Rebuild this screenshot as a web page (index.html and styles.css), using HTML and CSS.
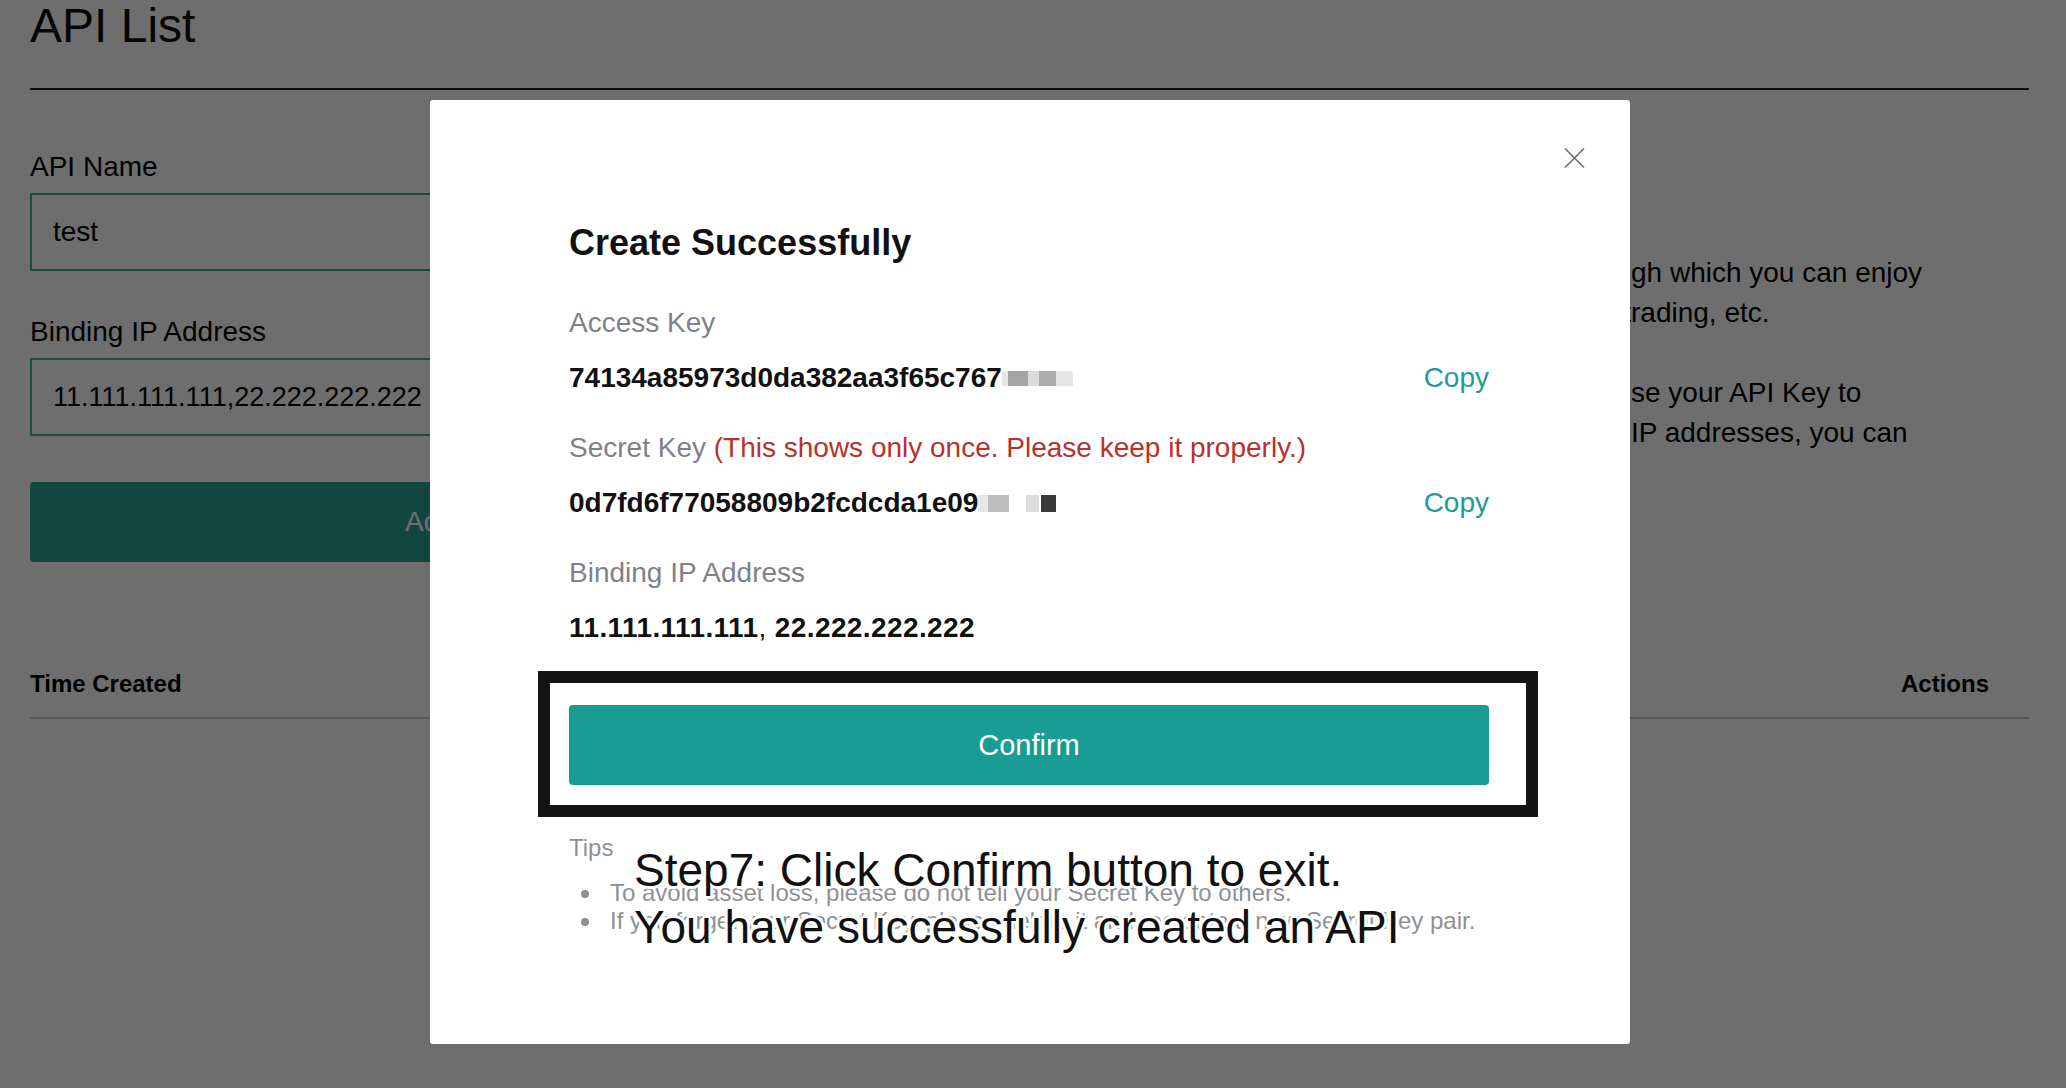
FILE: index.html
```html
<!DOCTYPE html>
<html lang="en">
<head>
<meta charset="utf-8">
<title>API List</title>
<link rel="stylesheet" href="styles.css">
</head>
<body>
<div class="page">
  <h1 class="page-title">API List</h1>
  <div class="main">
    <form class="form-col">
      <label class="f-label">API Name</label>
      <div class="f-input">test</div>
      <label class="f-label f-gap">Binding IP Address</label>
      <div class="f-input f-ip">11.111.111.111,22.222.222.222</div>
      <button type="button" class="add-btn">Add</button>
    </form>
    <div class="info-col">
      <p class="info-p">
        <span class="ln"><span class="hid">API is a powerful tool, throu</span><span>gh which you can enjoy</span></span>
        <span class="ln"><span class="hid">services such as automatic t</span><span>rading, etc.</span></span>
      </p>
      <p class="info-p">
        <span class="ln"><span class="hid">We recommend that you u</span><span>se your API Key to</span></span>
        <span class="ln"><span class="hid">bind IP addresses. If you bind </span><span>IP addresses, you can</span></span>
      </p>
    </div>
  </div>
  <div class="table-head">
    <span>Time Created</span>
    <span>Actions</span>
  </div>
</div>

<div class="mask"></div>

<div class="modal">
  <svg class="m-close" viewBox="0 0 21 20" width="21" height="20" aria-hidden="true">
    <path d="M1 0.5 L20 19.5 M20 0.5 L1 19.5" stroke="#6f6f6f" stroke-width="1.6" fill="none"/>
  </svg>
  <h2 class="m-title">Create Successfully</h2>

  <div class="m-field">
    <div class="m-label">Access Key</div>
    <div class="m-row">
      <span class="m-value">74134a85973d0da382aa3f65c767<span class="blur b1"><i class="w6 c-l"></i><i class="w20 c-m"></i><i class="w11 c-l2"></i><i class="w17 c-m2"></i><i class="w17 c-l"></i></span></span>
      <span class="m-copy">Copy</span>
    </div>
  </div>

  <div class="m-field">
    <div class="m-label">Secret Key <span class="m-warn">(This shows only once. Please keep it properly.)</span></div>
    <div class="m-row">
      <span class="m-value">0d7fd6f77058809b2fcdcda1e09<span class="blur b2"><i class="w10 c-l"></i><i class="w21 c-s"></i><i class="w17 c-w"></i><i class="w13 c-l2"></i><i class="w2 c-w"></i><i class="w15 c-d"></i></span></span>
      <span class="m-copy">Copy</span>
    </div>
  </div>

  <div class="m-field">
    <div class="m-label">Binding IP Address</div>
    <div class="m-row">
      <span class="m-value m-ip">11.111.111.111<span class="m-comma">, </span>22.222.222.222</span>
    </div>
  </div>

  <button type="button" class="m-confirm">Confirm</button>

  <div class="m-tips-title">Tips</div>
  <ul class="m-tips">
    <li>To avoid asset loss, please do not tell your Secret Key to others.</li>
    <li>If you forget your Secret Key, please delete it and recreate a new Secret Key pair.</li>
  </ul>

  <div class="hl"></div>
  <div class="note">Step7: Click Confirm button to exit.<br>You have successfully created an API</div>
</div>
</body>
</html>
```

FILE: styles.css
```css
* {
  box-sizing: border-box;
}

html,
body {
  margin: 0;
}

body {
  width: 2066px;
  height: 1088px;
  overflow: hidden;
  position: relative;
  background: #ffffff;
  color: #000000;
  font-family: "Liberation Sans", Arial, Helvetica, sans-serif;
}

/* ---------- underlying page ---------- */
.page {
  padding: 2px 37px 0 30px;
}

.page-title {
  margin: 0;
  padding-bottom: 38px;
  border-bottom: 2px solid #1c1c1c;
  font-size: 48px;
  line-height: 48px;
  font-weight: 400;
  color: #0d0d0d;
}

.main {
  display: flex;
  padding-top: 61px;
}

.form-col {
  width: 800px;
  margin: 0;
  display: flex;
  flex-direction: column;
}

.f-label {
  font-size: 28px;
  line-height: 32px;
  color: #000;
}

.f-gap {
  margin-top: 45px;
}

.f-input {
  margin-top: 10px;
  height: 78px;
  border: 2px solid #42ab9f;
  padding: 0 21px;
  font-size: 28px;
  line-height: 74px;
  color: #000;
}

.f-ip {
  font-size: 27px;
  letter-spacing: 0;
}

.add-btn {
  margin-top: 46px;
  height: 80px;
  border: 0;
  border-radius: 4px;
  background: #2ca097;
  color: #ffffff;
  font-family: inherit;
  font-size: 28px;
}

.info-col {
  margin-left: 300px;
  padding-top: 102px;
  font-size: 28px;
  line-height: 40px;
  color: #000;
}

.info-p {
  margin: 0 0 40px;
}

.ln {
  display: flex;
  white-space: nowrap;
}

.hid {
  flex: 0 0 501px;
  overflow: hidden;
  text-align: right;
}

.table-head {
  display: flex;
  justify-content: space-between;
  margin-top: 107px;
  padding: 0 40px 18px 0;
  border-bottom: 2px solid #cccccc;
  font-size: 24px;
  line-height: 30px;
  font-weight: 700;
}

/* ---------- mask ---------- */
.mask {
  position: fixed;
  inset: 0;
  background: rgba(0, 0, 0, 0.57);
}

/* ---------- modal ---------- */
.modal {
  position: absolute;
  left: 430px;
  top: 100px;
  width: 1200px;
  height: 944px;
  padding: 121px 141px 0 139px;
  background: #ffffff;
  border-radius: 3px;
}

.m-close {
  position: absolute;
  top: 48px;
  right: 45px;
}

.m-title {
  margin: 0;
  padding-bottom: 8px;
  font-size: 36px;
  line-height: 44px;
  font-weight: 700;
  color: #111;
}

.m-field {
  margin-top: 30px;
}

.m-label {
  font-size: 28px;
  line-height: 40px;
  color: #7f8189;
}

.m-warn {
  color: #b8312b;
}

.m-row {
  display: flex;
  justify-content: space-between;
  align-items: center;
  margin-top: 15px;
  font-size: 28px;
  line-height: 40px;
}

.m-value {
  display: flex;
  align-items: center;
  font-weight: 700;
  color: #111;
  white-space: pre;
}

.m-ip {
  letter-spacing: 0.4px;
}

.m-comma {
  font-weight: 400;
}

.m-copy {
  color: #1f9c91;
}

.blur {
  display: flex;
  height: 15px;
}

.b2 {
  height: 17px;
}

.blur i {
  display: block;
  height: 100%;
}

.w2 { width: 2px; }
.w6 { width: 6px; }
.w10 { width: 10px; }
.w11 { width: 11px; }
.w13 { width: 13px; }
.w15 { width: 15px; }
.w17 { width: 17px; }
.w20 { width: 20px; }
.w21 { width: 21px; }

.c-w { background: #ffffff; }
.c-l { background: #e6e6e6; }
.c-l2 { background: #dcdcdc; }
.c-m { background: #a4a4a4; }
.c-m2 { background: #acacac; }
.c-s { background: #bdbdbd; }
.c-d { background: #3a3a3a; }

.m-confirm {
  display: block;
  width: 100%;
  margin-top: 57px;
  height: 80px;
  border: 0;
  border-radius: 4px;
  background: #189c94;
  color: #ffffff;
  font-family: inherit;
  font-size: 29px;
}

.m-tips-title {
  margin-top: 49px;
  font-size: 24px;
  line-height: 28px;
  color: #8e9096;
}

.m-tips {
  list-style: none;
  margin: 17px 0 0;
  padding: 0 0 0 41px;
  font-size: 24px;
  line-height: 28px;
  color: #8e9096;
}

.m-tips li {
  position: relative;
}

.m-tips li::before {
  content: "";
  position: absolute;
  left: -29px;
  top: 11px;
  width: 8px;
  height: 8px;
  border-radius: 50%;
  background: #8e9096;
}

/* ---------- annotation ---------- */
.hl {
  position: absolute;
  left: 108px;
  top: 571px;
  width: 1000px;
  height: 146px;
  border: 12px solid #141414;
}

.note {
  position: absolute;
  left: 204px;
  top: 742px;
  font-size: 46px;
  line-height: 57px;
  color: #111;
  white-space: nowrap;
  text-shadow:
    2px 0 0 #fff, -2px 0 0 #fff, 0 2px 0 #fff, 0 -2px 0 #fff,
    2px 2px 0 #fff, -2px -2px 0 #fff, 2px -2px 0 #fff, -2px 2px 0 #fff,
    3px 0 1px #fff, -3px 0 1px #fff, 0 3px 1px #fff, 0 -3px 1px #fff;
}
```
